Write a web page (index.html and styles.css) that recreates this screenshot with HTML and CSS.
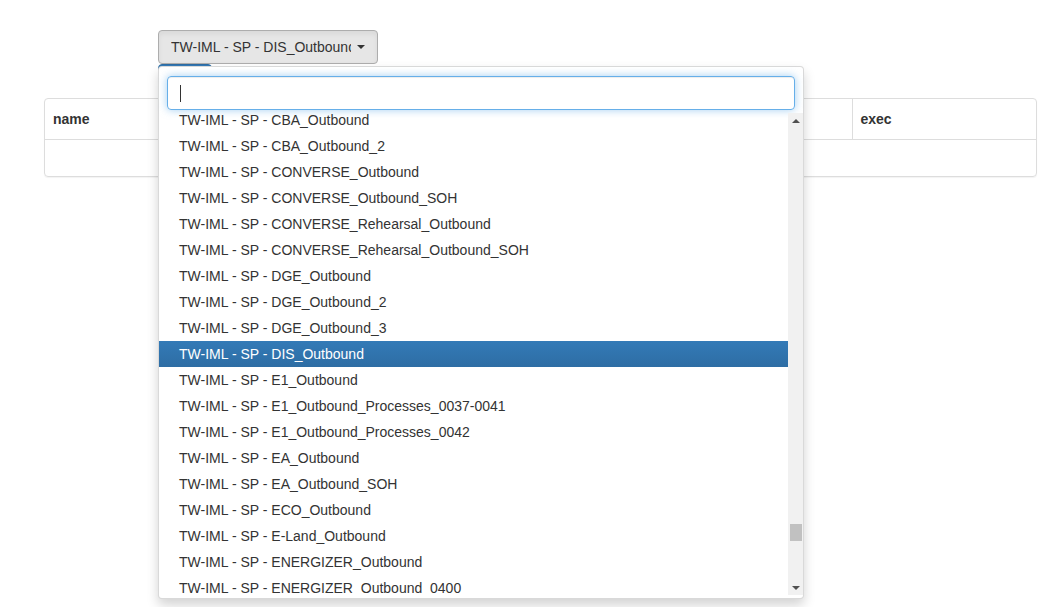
FILE: index.html
```html
<!DOCTYPE html>
<html>
<head>
<meta charset="utf-8">
<link rel="stylesheet" href="styles.css">
</head>
<body>
<div class="page">
  <div class="select-wrap">
    <button class="select-btn">
      <span class="filter-option">TW-IML - SP - DIS_Outbound</span>
      <span class="caret"></span>
    </button>
    <div class="dropdown">
      <div class="searchbox">
        <div class="search-input"><span class="cursor"></span></div>
      </div>
      <div class="list-area">
        <div class="list-view">
          <ul class="options">
            <li>TW-IML - SP - CBA_Outbound</li>
            <li>TW-IML - SP - CBA_Outbound_2</li>
            <li>TW-IML - SP - CONVERSE_Outbound</li>
            <li>TW-IML - SP - CONVERSE_Outbound_SOH</li>
            <li>TW-IML - SP - CONVERSE_Rehearsal_Outbound</li>
            <li>TW-IML - SP - CONVERSE_Rehearsal_Outbound_SOH</li>
            <li>TW-IML - SP - DGE_Outbound</li>
            <li>TW-IML - SP - DGE_Outbound_2</li>
            <li>TW-IML - SP - DGE_Outbound_3</li>
            <li class="selected">TW-IML - SP - DIS_Outbound</li>
            <li>TW-IML - SP - E1_Outbound</li>
            <li>TW-IML - SP - E1_Outbound_Processes_0037-0041</li>
            <li>TW-IML - SP - E1_Outbound_Processes_0042</li>
            <li>TW-IML - SP - EA_Outbound</li>
            <li>TW-IML - SP - EA_Outbound_SOH</li>
            <li>TW-IML - SP - ECO_Outbound</li>
            <li>TW-IML - SP - E-Land_Outbound</li>
            <li>TW-IML - SP - ENERGIZER_Outbound</li>
            <li>TW-IML - SP - ENERGIZER_Outbound_0400</li>
            <li>TW-IML - SP - ENERGIZER_Outbound_SOH</li>
          </ul>
        </div>
        <div class="scrollbar">
          <div class="arrow up"></div>
          <div class="track"><div class="thumb"></div></div>
          <div class="arrow down"></div>
        </div>
      </div>
    </div>
  </div>
  <div class="primary-btn"></div>
  <div class="panel">
    <table class="grid">
      <thead>
        <tr><th class="col-name">name</th><th class="col-exec">exec</th></tr>
      </thead>
      <tbody>
        <tr><td>&nbsp;</td><td>&nbsp;</td></tr>
      </tbody>
    </table>
  </div>
</div>
</body>
</html>
```

FILE: styles.css
```css
* { box-sizing: border-box; }
html, body { margin: 0; padding: 0; background: #fff; }
body {
  font-family: "Liberation Sans", Arial, Helvetica, sans-serif;
  font-size: 14px;
  line-height: 20px;
  color: #333;
}
.page {
  min-height: 607px;
  padding: 30px 20px 0 44px;
}
.select-wrap {
  position: relative;
  margin-left: 114px;
  width: 220px;
  height: 34px;
  z-index: 5;
}
.select-btn {
  display: flex;
  align-items: center;
  width: 220px;
  height: 34px;
  padding: 6px 12px 6px 12px;
  background: #e6e6e6;
  border: 1px solid #adadad;
  border-radius: 4px;
  box-shadow: inset 0 3px 5px rgba(0,0,0,.06);
  font-family: inherit;
  font-size: 14px;
  color: #333;
  text-align: left;
}
.filter-option {
  flex: 1;
  overflow: hidden;
  white-space: nowrap;
  text-overflow: clip;
  margin-right: 6px;
}
.caret {
  width: 0;
  height: 0;
  border-top: 4px solid #333;
  border-left: 4px solid transparent;
  border-right: 4px solid transparent;
}
.dropdown {
  position: absolute;
  top: 36px;
  left: 0;
  width: 646px;
  background: #fff;
  border: 1px solid rgba(0,0,0,.15);
  border-radius: 4px;
  box-shadow: 0 6px 12px rgba(0,0,0,.175);
  padding: 5px 0 3px;
}
.searchbox {
  padding: 4px 8px 3px;
}
.search-input {
  height: 34px;
  border: 1px solid #66afe9;
  border-radius: 4px;
  box-shadow: inset 0 1px 1px rgba(0,0,0,.075), 0 0 8px rgba(102,175,233,.6);
  padding: 7px 12px;
  display: flex;
  align-items: center;
}
.cursor {
  display: block;
  width: 1px;
  height: 17px;
  background: #333;
}
.list-area {
  display: flex;
  height: 482px;
  overflow: hidden;
}
.list-view {
  flex: 1;
  overflow: hidden;
}
.options {
  list-style: none;
  margin: -6px 0 0;
  padding: 0;
}
.options li {
  height: 26px;
  line-height: 26px;
  padding: 0 20px;
  white-space: nowrap;
  color: #333;
}
.options li.selected {
  color: #fff;
  background: linear-gradient(to bottom, #337ab7 0, #2e6da4 100%);
}
.scrollbar {
  width: 15px;
  background: #f1f1f1;
  display: flex;
  flex-direction: column;
}
.arrow {
  height: 15px;
  display: flex;
  align-items: center;
  justify-content: center;
}
.arrow::after {
  content: "";
  width: 0;
  height: 0;
  border-left: 4px solid transparent;
  border-right: 4px solid transparent;
}
.arrow.up::after { border-bottom: 4px solid #505050; }
.arrow.down::after { border-top: 4px solid #505050; }
.track {
  flex: 1;
  position: relative;
}
.thumb {
  position: absolute;
  left: 2px;
  right: 1px;
  top: 396px;
  height: 17px;
  background: #c1c1c1;
}
.primary-btn {
  margin-left: 114px;
  width: 54px;
  height: 34px;
  background: #337ab7;
  border: 1px solid #2e6da4;
  border-radius: 4px;
}
.panel {
  border: 1px solid #ddd;
  border-radius: 4px;
  box-shadow: 0 1px 1px rgba(0,0,0,.05);
  overflow: hidden;
}
.grid {
  width: 100%;
  border-collapse: collapse;
}
.grid th {
  text-align: left;
  font-weight: bold;
  padding: 10px 8px;
  line-height: 20px;
  border-bottom: 1px solid #ddd;
}
.grid td {
  padding: 8px;
  line-height: 20px;
}
.grid th + th {
  border-left: 1px solid #ddd;
}
.col-exec { width: 184px; }
```
